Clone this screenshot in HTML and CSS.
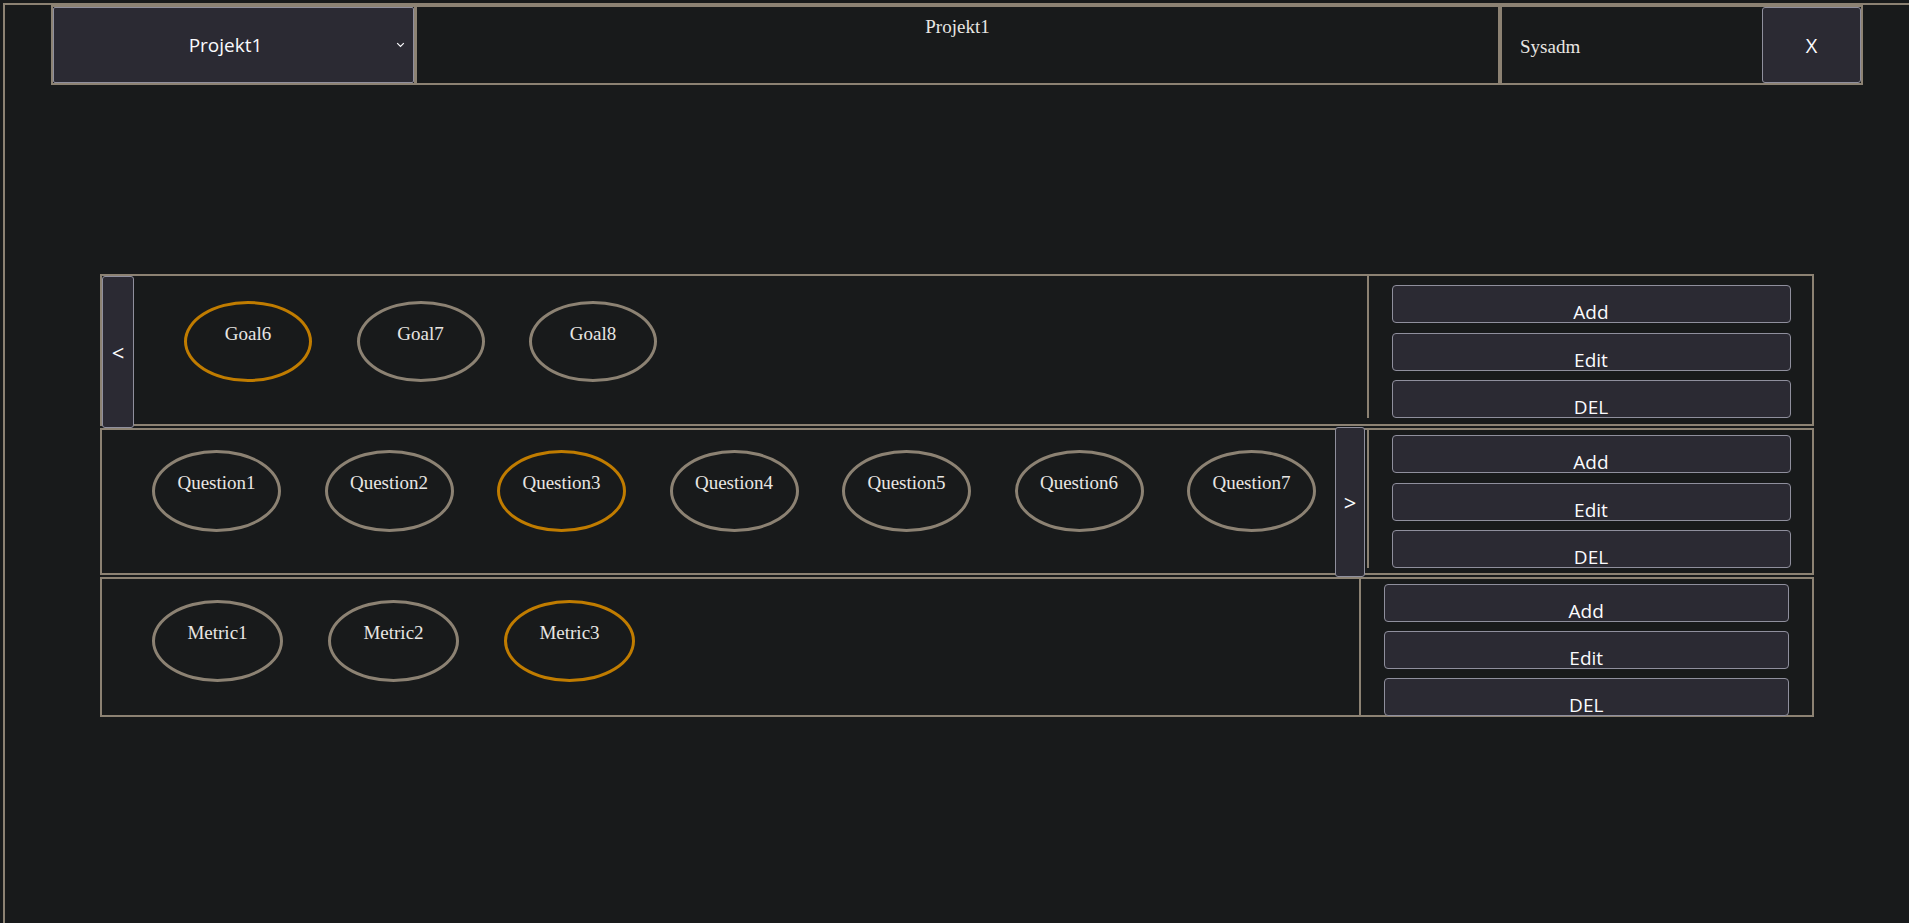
FILE: index.html
```html
<!DOCTYPE html>
<html lang="de">
<head>
<meta charset="utf-8">
<title>Projekt1</title>
<link rel="stylesheet" href="styles.css">
</head>
<body>
<div class="frame">
  <header class="topbar">
    <div class="project-select">
      <span class="select-value">Projekt1</span>
      <svg class="select-arrow" width="9" height="6" viewBox="0 0 9 6"><path d="M1.2 1.2 L4.5 4.5 L7.8 1.2" fill="none" stroke="#fbfbfe" stroke-width="1.2"/></svg>
    </div>
    <div class="project-title">Projekt1</div>
    <div class="user-cell">
      <span class="user-name">Sysadm</span>
      <button class="close-btn">X</button>
    </div>
  </header>

  <main class="board">
    <section class="row row-goals">
      <button class="nav-btn nav-prev">&lt;</button>
      <div class="items items-goals">
        <div class="node node-goal selected">Goal6</div>
        <div class="node node-goal">Goal7</div>
        <div class="node node-goal">Goal8</div>
      </div>
      <div class="actions actions-goals">
        <button class="action-btn">Add</button>
        <button class="action-btn">Edit</button>
        <button class="action-btn">DEL</button>
      </div>
    </section>

    <section class="row row-questions">
      <div class="items items-questions">
        <div class="node node-question">Question1</div>
        <div class="node node-question">Question2</div>
        <div class="node node-question selected">Question3</div>
        <div class="node node-question">Question4</div>
        <div class="node node-question">Question5</div>
        <div class="node node-question">Question6</div>
        <div class="node node-question">Question7</div>
      </div>
      <button class="nav-btn nav-next">&gt;</button>
      <div class="actions actions-questions">
        <button class="action-btn">Add</button>
        <button class="action-btn">Edit</button>
        <button class="action-btn">DEL</button>
      </div>
    </section>

    <section class="row row-metrics">
      <div class="items items-metrics">
        <div class="node node-metric">Metric1</div>
        <div class="node node-metric">Metric2</div>
        <div class="node node-metric selected">Metric3</div>
      </div>
      <div class="actions actions-metrics">
        <button class="action-btn">Add</button>
        <button class="action-btn">Edit</button>
        <button class="action-btn">DEL</button>
      </div>
    </section>
  </main>
</div>
</body>
</html>
```

FILE: styles.css
```css
* {
  box-sizing: border-box;
}

html,
body {
  margin: 0;
  padding: 0;
  height: 100%;
  overflow: hidden;
  background: #181a1b;
}

body {
  font-family: "Liberation Serif", "Times New Roman", serif;
  font-size: 19px;
  color: #e8e6e3;
}

.frame {
  margin: 3px 0 0 3px;
  height: calc(100vh - 3px);
  border-left: 2px solid #8c8273;
  border-top: 2px solid #8c8273;
}

/* ---------- top bar ---------- */
.topbar {
  display: flex;
  width: 1812px;
  height: 80px;
  margin-left: 46px;
  border: 2px solid #8c8273;
}

.project-select {
  flex: none;
  width: 361px;
  height: 76px;
  display: flex;
  align-items: center;
  padding: 0 8px 0 1px;
  background: #2b2a33;
  border: 1px solid #8f8f9d;
  border-radius: 2px;
  color: #fbfbfe;
  font-family: "Open Sans", "Noto Sans", sans-serif;
  font-size: 19px;
}

.select-value {
  flex: 1;
  text-align: center;
}

.select-arrow {
  flex: none;
  display: block;
}

.project-title {
  flex: 1;
  border-left: 3px solid #8c8273;
  padding-top: 9px;
  text-align: center;
}

.user-cell {
  flex: none;
  width: 363px;
  display: flex;
  align-items: center;
  border-left: 4px solid #8c8273;
}

.user-name {
  padding-left: 18px;
  padding-top: 3px;
}

.close-btn {
  margin-left: auto;
  width: 99px;
  height: 76px;
  padding: 0;
  background: #2b2a33;
  border: 1px solid #8f8f9d;
  border-radius: 3px;
  color: #fbfbfe;
  font-family: "Open Sans", "Noto Sans", sans-serif;
  font-size: 20px;
}

/* ---------- board ---------- */
.board {
  width: 1714px;
  margin: 189px 0 0 95px;
}

.row {
  display: flex;
  align-items: flex-start;
  border: 2px solid #8c8273;
  margin-bottom: 2px;
}

.row-goals {
  height: 152px;
}

.row-questions {
  height: 147px;
}

.row-metrics {
  height: 140px;
}

.nav-btn {
  flex: none;
  padding: 0;
  background: #2b2a33;
  border: 1px solid #8f8f9d;
  border-radius: 3px;
  color: #fbfbfe;
  font-family: "Open Sans", "Noto Sans", sans-serif;
  font-size: 22px;
}

.nav-prev {
  width: 32px;
  height: 152px;
}

.nav-next {
  width: 30px;
  height: 150px;
  margin: -3px 2px 0 0;
}

.items {
  flex: 1;
  min-width: 0;
  display: flex;
  overflow: hidden;
  padding-left: 50px;
}

.items-goals {
  padding-top: 25px;
  gap: 44.5px;
}

.items-questions {
  padding-top: 20px;
  gap: 43.5px;
}

.items-metrics {
  padding-top: 21px;
  gap: 45px;
}

.node {
  flex: none;
  height: 82px;
  border: 3px solid #8c8273;
  border-radius: 50%;
  padding-top: 19px;
  text-align: center;
  white-space: nowrap;
}

.node.selected {
  border-color: #c07c00;
}

.node-goal {
  width: 128px;
  height: 81px;
}

.node-question {
  width: 129px;
}

.node-metric {
  width: 131px;
}

.actions {
  flex: none;
  display: flex;
  flex-direction: column;
  gap: 9.5px;
  border-left: 2px solid #8c8273;
}

.actions-goals {
  width: 445px;
  padding: 9px 21.5px 0 22.5px;
}

.actions-questions {
  width: 445px;
  padding: 5px 21.5px 0 22.5px;
}

.actions-metrics {
  width: 453px;
  align-self: stretch;
  gap: 9px;
  padding: 5px 23px 0 22.5px;
}

.action-btn {
  display: block;
  width: 100%;
  height: 38px;
  padding: 17px 0 0;
  line-height: 19px;
  background: #2b2a33;
  border: 1px solid #8f8f9d;
  border-radius: 4px;
  color: #fbfbfe;
  font-family: "Open Sans", "Noto Sans", sans-serif;
  font-size: 19px;
  text-align: center;
}
```
